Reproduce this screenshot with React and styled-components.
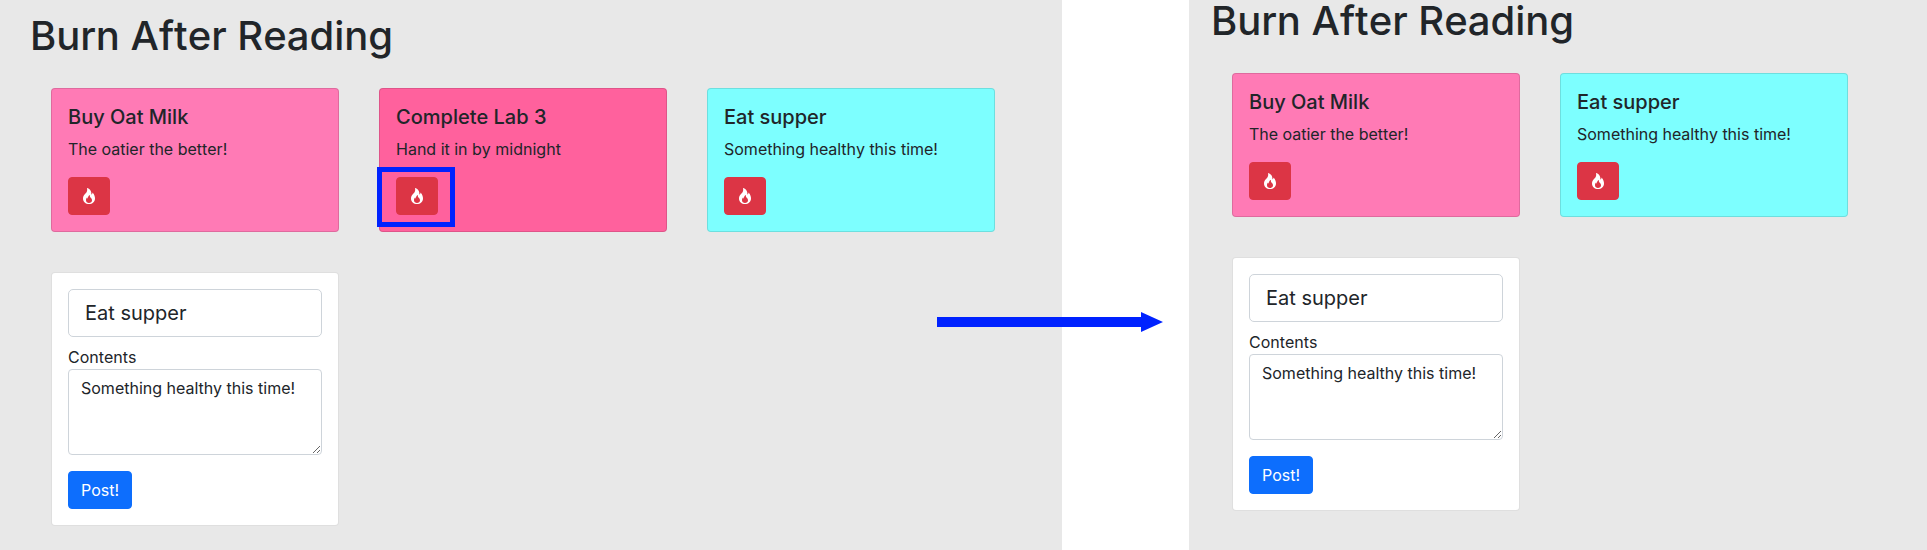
import React from "react";
import styled, { createGlobalStyle } from "styled-components";
import { BsFire } from "react-icons/bs";

const Global = createGlobalStyle`
  html, body { margin: 0; padding: 0; background: #fff; }
  body { font-family: Inter, "Liberation Sans", sans-serif; font-size: 16px; line-height: 1.5; color: #212529; font-optical-sizing: none; font-kerning: none; }
  input, textarea, button { font-optical-sizing: none; font-kerning: none; }
  * { box-sizing: border-box; }
`;

const Page = styled.div`
  position: relative;
  display: flex;
  width: 1927px;
  height: 550px;
  overflow: hidden;
  background: #fff;
`;

const Panel = styled.section`
  flex: 0 0 ${(p) => p.$width}px;
  margin-left: ${(p) => p.$gapBefore}px;
  height: 550px;
  padding-left: ${(p) => p.$inset}px;
  background: #e8e8e8;
  overflow: hidden;
`;

const Heading = styled.h1`
  margin: ${(p) => p.$top}px 0 28px -21px;
  font-size: 40px;
  line-height: 48px;
  font-weight: 500;
`;

const Board = styled.div`
  display: grid;
  grid-template-columns: repeat(3, 288px);
  gap: 40px;
  align-items: start;
`;

const Card = styled.article`
  height: 144px;
  padding: 16px;
  border: 1px solid rgba(0, 0, 0, 0.125);
  border-radius: 4px;
  background: ${(p) => p.$color};
`;

const CardTitle = styled.h5`
  margin: 0 0 8px;
  font-size: 20px;
  line-height: 24px;
  font-weight: 500;
`;

const CardText = styled.p`
  margin: 0 0 16px;
`;

const BurnSlot = styled.div`
  position: relative;
  width: 42px;
  height: 38px;
`;

const BurnButton = styled.button`
  display: flex;
  align-items: center;
  justify-content: center;
  width: 42px;
  height: 38px;
  padding: 0;
  border: 1px solid #dc3545;
  border-radius: 4px;
  background: #dc3545;
  color: #fff;
  font-size: 16px;
`;

const Highlight = styled.span`
  position: absolute;
  left: -19px;
  top: -10px;
  width: 78px;
  height: 60px;
  border: 5px solid #0022ff;
  pointer-events: none;
`;

const FormCard = styled.form`
  height: 254px;
  padding: 16px;
  background: #fff;
  border: 1px solid rgba(0, 0, 0, 0.125);
  border-radius: 4px;
`;

const TitleInput = styled.input`
  display: block;
  width: 100%;
  height: 48px;
  margin-bottom: 8px;
  padding: 8px 16px;
  border: 1px solid #ced4da;
  border-radius: 5px;
  background: #fff;
  color: #212529;
  font: 400 20px/30px Inter, sans-serif;
  outline: none;
`;

const FieldLabel = styled.label`
  display: block;
  height: 24px;
`;

const ContentsInput = styled.textarea`
  display: block;
  width: 100%;
  height: 86px;
  margin-bottom: 16px;
  padding: 6px 12px;
  border: 1px solid #ced4da;
  border-radius: 4px;
  background: #fff;
  color: #212529;
  font: 400 16px/24px Inter, sans-serif;
  outline: none;
`;

const PostButton = styled.button`
  display: block;
  height: 38px;
  padding: 6px 12px;
  border: 1px solid #0d6efd;
  border-radius: 4px;
  background: #0d6efd;
  color: #fff;
  font: 400 16px/24px Inter, sans-serif;
`;

const Arrow = styled.svg`
  position: absolute;
  left: 937px;
  top: 312px;
  width: 226px;
  height: 20px;
`;

const Note = ({ title, text, color, highlighted }) => (
  <Card $color={color}>
    <CardTitle>{title}</CardTitle>
    <CardText>{text}</CardText>
    <BurnSlot>
      <BurnButton type="button" aria-label="Burn">
        <BsFire />
      </BurnButton>
      {highlighted && <Highlight />}
    </BurnSlot>
  </Card>
);

const Composer = () => (
  <FormCard onSubmit={(e) => e.preventDefault()}>
    <TitleInput defaultValue="Eat supper" />
    <FieldLabel>Contents</FieldLabel>
    <ContentsInput rows={3} defaultValue="Something healthy this time!" />
    <PostButton type="submit">Post!</PostButton>
  </FormCard>
);

const PINK = "#ff7ab5";
const HOT = "#ff619d";
const CYAN = "#7dffff";

export default function App() {
  return (
    <Page>
      <Global />
      <Panel $width={1062} $gapBefore={0} $inset={51}>
        <Heading $top={12}>Burn After Reading</Heading>
        <Board>
          <Note title="Buy Oat Milk" text="The oatier the better!" color={PINK} />
          <Note title="Complete Lab 3" text="Hand it in by midnight" color={HOT} highlighted />
          <Note title="Eat supper" text="Something healthy this time!" color={CYAN} />
          <Composer />
        </Board>
      </Panel>
      <Panel $width={738} $gapBefore={127} $inset={43}>
        <Heading $top={-3}>Burn After Reading</Heading>
        <Board>
          <Note title="Buy Oat Milk" text="The oatier the better!" color={PINK} />
          <Note title="Eat supper" text="Something healthy this time!" color={CYAN} />
          <div />
          <Composer />
        </Board>
      </Panel>
      <Arrow viewBox="0 0 226 20" aria-hidden="true">
        <path d="M0 5H204V0L226 10L204 20V15H0Z" fill="#0022ff" />
      </Arrow>
    </Page>
  );
}
